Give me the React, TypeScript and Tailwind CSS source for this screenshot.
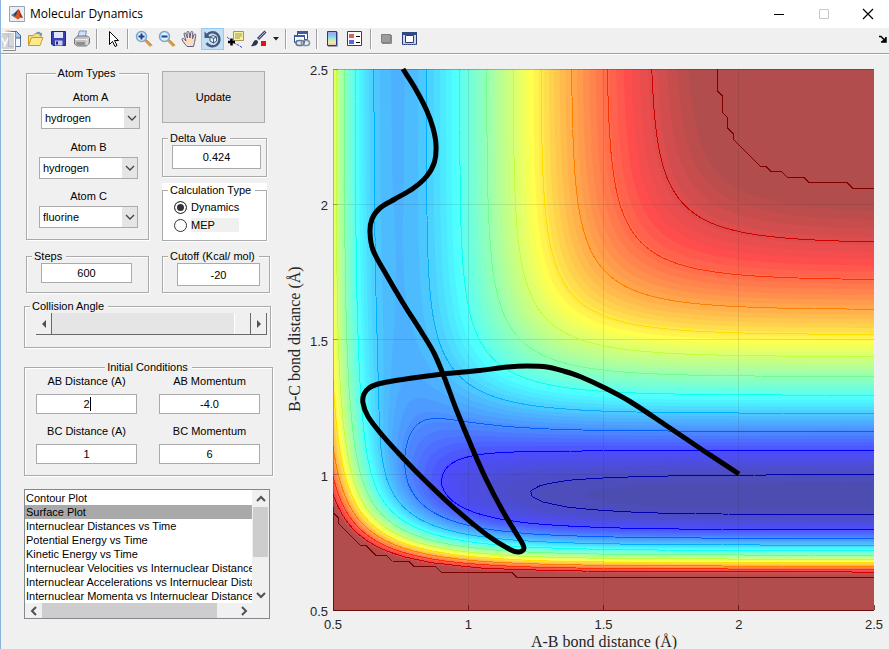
import React, { useState } from 'react'

/* ---------- Potential energy surface (LEPS, collinear H + HF) ---------- */

const HH = { d: 110.479, b: 1.9789, r: 0.7388, k: 0.1875 }
const HF = { d: 142.1119, b: 2.2607, r: 0.9197, k: 0.1788 }
const CUTOFF = -21.5
const V_MIN = -142.1

type Pair = typeof HH

const terms = (p: Pair, r: number) => {
  const e = Math.exp(-p.b * (r - p.r))
  const f = p.d / 4 / (1 + p.k)
  return {
    q: f * ((3 + p.k) * e * e - (2 + 6 * p.k) * e),
    j: f * ((1 + 3 * p.k) * e * e - (6 + 2 * p.k) * e),
  }
}

const energy = (ab: number, bc: number) => {
  const a = terms(HH, ab)
  const b = terms(HF, bc)
  const c = terms(HF, ab + bc)
  const s = (a.j - b.j) ** 2 + (b.j - c.j) ** 2 + (c.j - a.j) ** 2
  return Math.min(CUTOFF, a.q + b.q + c.q - Math.sqrt(s / 2))
}

const N = 101
const GRID: number[][] = []
for (let row = 0; row < N; row++) {
  GRID.push([])
  for (let col = 0; col < N; col++) {
    GRID[row].push(energy(0.5 + (col * 2) / (N - 1), 2.5 - (row * 2) / (N - 1)))
  }
}

// Plot area inside the chart's viewBox
const X0 = 48
const Y0 = 15
const SIZE = 541
const STEP = SIZE / (N - 1)

const clampIndex = (i: number) => Math.max(0, Math.min(N - 1, i))

// Marching squares. A closed path is padded with a ring of low values.
const isoPath = (level: number, closed: boolean) => {
  const at = (c: number, r: number) => (c < 0 || r < 0 || c >= N || r >= N ? -1e9 : GRID[r][c])
  const next = new Map<string, string>()
  const points = new Map<string, string>()
  const from = closed ? -1 : 0
  const to = closed ? N : N - 1
  for (let r = from; r < to; r++) {
    for (let c = from; c < to; c++) {
      const corners = [[c, r], [c + 1, r], [c + 1, r + 1], [c, r + 1]]
      const values = corners.map(([x, y]) => at(x, y))
      const above = values.map((v) => v >= level)
      if (above.every((v) => v === above[0])) continue
      const keys = [`h${c},${r}`, `v${c + 1},${r}`, `h${c},${r + 1}`, `v${c},${r}`]
      const crossings: { key: string; exit: boolean }[] = []
      for (let e = 0; e < 4; e++) {
        const n = (e + 1) % 4
        if (above[e] === above[n]) continue
        const t = (level - values[e]) / (values[n] - values[e])
        const [ax, ay] = corners[e]
        const [bx, by] = corners[n]
        const px = X0 + STEP * clampIndex(ax + (bx - ax) * t)
        const py = Y0 + STEP * clampIndex(ay + (by - ay) * t)
        points.set(keys[e], `${px.toFixed(1)} ${py.toFixed(1)}`)
        crossings.push({ key: keys[e], exit: above[e] })
      }
      crossings.forEach((cr, i) => {
        if (!cr.exit) return
        const prev = crossings[(i + crossings.length - 1) % crossings.length]
        next.set(cr.key, prev.key)
      })
    }
  }
  let d = ''
  if (!closed) {
    next.forEach((end, start) => {
      d += `M${points.get(start)}L${points.get(end)}`
    })
    return d
  }
  while (next.size > 0) {
    let key = next.keys().next().value as string
    d += 'M' + points.get(key)
    while (next.has(key)) {
      const n = next.get(key) as string
      next.delete(key)
      key = n
      d += 'L' + points.get(key)
    }
    d += 'Z'
  }
  return d
}

const ramp = (j: number) => {
  if (j < 1 || j > 47) return 0
  if (j <= 16) return j / 16
  return j <= 31 ? 1 : (48 - j) / 16
}

const jet = (i: number, alpha: number) => {
  const mix = (v: number) => Math.round(255 * (v * alpha + 1 - alpha))
  return `rgb(${mix(ramp(i - 24))},${mix(ramp(i - 8))},${mix(ramp(i + 8))})`
}

const SPAN = CUTOFF - V_MIN
const BANDS = Array.from({ length: 62 }, (_, i) => ({
  d: isoPath(V_MIN + (SPAN * (i + 1)) / 64, true),
  color: jet(i + 2, 0.7),
}))

const LINES = Array.from({ length: 12 }, (_, i) => {
  const level = i === 11 ? CUTOFF : -138.1 + i * 10.6
  const index = Math.min(64, Math.floor(((level - V_MIN) / SPAN) * 64) + 1)
  return { d: isoPath(level, false), color: jet(index, 1) }
})

/* ---------- Trajectory ---------- */

const TRAJECTORY = [
  [454, 420], [422, 399], [382, 372], [345, 347.5], [320, 334], [295, 322.5], [280, 317.5], [262, 313],
  [242, 312], [222, 313], [195, 316.5], [158, 320], [135, 323], [105, 327.5], [93, 330], [84, 334],
  [79, 340], [78, 349], [83, 362.5], [98, 382], [118, 404], [138, 424.5], [168, 453], [202, 481],
  [225, 495.5], [234, 498], [239, 494], [231.5, 480], [218, 457.5], [201.5, 426], [188, 396], [171.5, 356],
  [158, 320], [149, 299], [138, 280.5], [118, 249], [101.5, 221], [88, 196], [85, 178], [87, 165],
  [95, 154], [110, 145], [128, 134.5], [141.5, 122.5], [149.5, 108], [151, 91], [148, 74], [141.5, 56],
  [130, 34], [118, 15],
]

const smoothPath = (pts: number[][]) => {
  const tangent = (i: number) => {
    const a = pts[Math.max(0, i - 1)]
    const b = pts[Math.min(pts.length - 1, i + 1)]
    const l = Math.hypot(b[0] - a[0], b[1] - a[1])
    return [(b[0] - a[0]) / l, (b[1] - a[1]) / l]
  }
  let d = `M${pts[0].join(' ')}`
  for (let i = 0; i < pts.length - 1; i++) {
    const [x1, y1] = pts[i]
    const [x2, y2] = pts[i + 1]
    const [t1, t2] = [tangent(i), tangent(i + 1)]
    const k = Math.hypot(x2 - x1, y2 - y1) / 3
    d += `C${x1 + t1[0] * k} ${y1 + t1[1] * k} ${x2 - t2[0] * k} ${y2 - t2[1] * k} ${x2} ${y2}`
  }
  return d
}

const TICKS = [0.5, 1, 1.5, 2, 2.5]
const tickX = (v: number) => X0 + ((v - 0.5) / 2) * SIZE
const tickY = (v: number) => Y0 + ((2.5 - v) / 2) * SIZE

function SurfaceChart() {
  return (
    <svg viewBox="0 1 604 594" className="block h-auto w-full" role="img" aria-label="Potential energy surface">
      <rect x={X0} y={Y0} width={SIZE} height={SIZE} fill={jet(1, 0.7)} />
      {BANDS.map((b) => (
        <path key={b.color} d={b.d} fill={b.color} />
      ))}
      <g stroke="#262626" strokeOpacity="0.12" shapeRendering="crispEdges">
        {TICKS.slice(1, 4).map((t) => (
          <path key={t} d={`M${tickX(t)} ${Y0}V${Y0 + SIZE}M${X0} ${tickY(t)}H${X0 + SIZE}`} />
        ))}
      </g>
      <g fill="none" shapeRendering="crispEdges">
        {LINES.map((l, i) => (
          <path key={i} d={l.d} stroke={l.color} />
        ))}
      </g>
      <path d={`M${X0} ${Y0 + SIZE}V${Y0}H${X0 + SIZE}`} fill="none" stroke="#262626" strokeOpacity="0.3" shapeRendering="crispEdges" />
      <path d={`M${X0} ${Y0 + SIZE}H${X0 + SIZE}M${X0} ${tickY(0.87)}V${Y0 + SIZE}`} stroke="#6b1010" shapeRendering="crispEdges" />
      <g stroke="#5a1010" strokeOpacity="0.8" shapeRendering="crispEdges">
        {TICKS.map((t) => (
          <path key={t} d={`M${tickX(t)} ${Y0 + SIZE}v-5`} />
        ))}
      </g>
      <g stroke="#262626" strokeOpacity="0.3" shapeRendering="crispEdges">
        {TICKS.map((t) => (
          <path key={t} d={`M${X0} ${tickY(t)}h5`} />
        ))}
      </g>
      <path d={smoothPath(TRAJECTORY)} fill="none" stroke="#000" strokeWidth="5" strokeLinejoin="round" />
      <g fill="#262626" className="font-['Liberation_Sans',sans-serif] text-[13px]">
        {TICKS.map((t) => (
          <g key={t}>
            <text x={tickX(t)} y={575} textAnchor="middle">{t}</text>
            <text x={X0 - 5} y={tickY(t) + 6} textAnchor="end">{t}</text>
          </g>
        ))}
      </g>
      <g fill="#262626" textAnchor="middle" className="font-['Liberation_Serif',serif] text-[16px]">
        <text x={319} y={593}>A-B bond distance (Å)</text>
        <text transform="translate(15 285) rotate(-90)">B-C bond distance (Å)</text>
      </g>
    </svg>
  )
}

/* ---------- Toolbar icons ---------- */

const ICONS: Record<string, React.ReactNode> = {
  new: (
    <>
      <path d="M5.500 2.500h8l4 4v11h-12z" fill="#f4f8ff" stroke="#5b7299" />
      <path d="M12 2.500h1.500l4 4V9H12z" fill="#a9c4ea" stroke="#3f5f96" />
      <circle cx="5" cy="4" r="3" fill="#f3b183" opacity=".8" />
      <path d="M-2 3.500H11.500V20.500H-2z" fill="#c9ccd0" fillOpacity=".8" stroke="#fff" />
      <path d="M12.500 4v17.500H0" stroke="#8b8b8b" fill="none" />
      <path d="M-1 9l3 6m3-6l-4 9" stroke="#fff" strokeWidth="1.500" fill="none" />
    </>
  ),
  open: (
    <>
      <path d="M2.500 16.500V6.500h5l1.500-2h6v4" fill="#f6dd7c" stroke="#c99a2c" />
      <path d="M2.500 16.500l3-8h11.500l-3 8z" fill="#ffe98f" stroke="#c99a2c" />
      <path d="M10 3.500c2-1.500 4-1 5 1l1-1v3h-3l1-1" fill="#6f8fc7" />
    </>
  ),
  save: (
    <>
      <path d="M2.500 2.500h14v14h-12.500l-1.500-1.500z" fill="#3b41b5" stroke="#23277c" />
      <path d="M5 3h9v6H5z" fill="#dfe6fb" />
      <path d="M6 11.500h7.500v5H6z" fill="#c9cfe6" />
      <path d="M7 12.500h2v3H7z" fill="#23277c" />
    </>
  ),
  print: (
    <>
      <path d="M5.500 8l2-6h7l-1.500 6z" fill="#cfe0fb" stroke="#7d90b5" />
      <path d="M2.500 10l3-3h10l2 2v5l-3 3h-9l-3-2z" fill="#c2c2c2" stroke="#777" />
      <path d="M3 10.500h12l2-1.500M15 10.500V16" stroke="#eee" fill="none" />
      <path d="M4 13h9v3H5z" fill="#8d8d8d" />
      <path d="M12 14h2v1h-2z" fill="#e2b23a" />
    </>
  ),
  pointer: <path d="M6.500 2.500v13l3-3 2.500 5 2-1-2.500-5h4z" fill="#fff" stroke="#000" />,
  zoomIn: (
    <>
      <path d="M11 11l6 6" stroke="#e0a04a" strokeWidth="3" />
      <path d="M12.500 11l5.500 5.500" stroke="#b77a2c" />
      <circle cx="7.500" cy="7.500" r="5" fill="#d9f1fb" stroke="#7aa5cf" strokeWidth="1.500" />
      <path d="M4.500 7.500h6M7.500 4.500v6" stroke="#243f87" strokeWidth="2" />
    </>
  ),
  zoomOut: (
    <>
      <path d="M11 11l6 6" stroke="#e0a04a" strokeWidth="3" />
      <path d="M12.500 11l5.500 5.500" stroke="#b77a2c" />
      <circle cx="7.500" cy="7.500" r="5" fill="#d9f1fb" stroke="#7aa5cf" strokeWidth="1.500" />
      <path d="M4.500 7.500h6" stroke="#243f87" strokeWidth="2" />
    </>
  ),
  pan: (
    <path
      d="M7 17.500C5 15 3 13 2 10.500c0-1.500 1.500-1.500 2.500 0l1.500 1.500-2-7c0-1.500 1.500-1.500 2 0l1.500 4-.5-5.500c0-1.500 2-1.500 2 0l1 5.500.800-5.500c.2-1.500 2-1.300 2 0l-.3 6.200 1.500-4c.5-1.200 2-.8 1.800.6l-1.300 7.200-1 4z"
      fill="#fbdcc0"
      stroke="#5b6184"
    />
  ),
  rotate: (
    <>
      <path d="M4 6a7 7 0 1 1-.5 8" fill="none" stroke="#46597c" strokeWidth="2.500" />
      <path d="M1.500 2.500v6.500h6.500z" fill="#46597c" />
      <path d="M7 8l3-1.500 3.500 1.500v4L10.500 14 7 12zM7 8l3.500 1.500L13.500 8M10.500 9.500V14" fill="#e6f1fb" stroke="#46597c" />
    </>
  ),
  dataCursor: (
    <>
      <path d="M7.500 2.500h10v9h-10z" fill="#f7f2a0" stroke="#a39a4a" />
      <path d="M9 5h7M9 7h7M9 9h5" stroke="#a39a4a" />
      <path d="M1 8c2 1 3 3 4.500 4.500S11 15 13 16.500l3 2" stroke="#3b46c7" fill="none" strokeDasharray="3 1" />
      <path d="M2 13h7M5.500 9.500v7" stroke="#000" strokeWidth="2.500" />
    </>
  ),
  brush: (
    <>
      <path d="M16.500 2.500L9 10" stroke="#3d4470" strokeWidth="3" />
      <path d="M16 3L9.500 9.500" stroke="#aeb6d8" />
      <path d="M2 17c1.500-1 1.500-3.500 3.500-5.500 2-1.500 4.500.5 3 3C7 17 4 17.500 2 17z" fill="#2c3355" />
      <path d="M12 12h5v5h-5z" fill="#e81010" />
    </>
  ),
  link: (
    <>
      <path d="M5.500 2.500h10v8h-10z" fill="#fff" stroke="#2f4a86" />
      <path d="M5 2h11v3H5z" fill="#3e5f9f" />
      <path d="M2.500 6.500h10v7h-10z" fill="#fff" stroke="#2f4a86" />
      <path d="M2 6h11v2H2z" fill="#3e5f9f" />
      <rect x="4" y="11.500" width="8" height="5" rx="2.500" fill="#dbe2ea" stroke="#5d7288" strokeWidth="1.500" />
      <rect x="9.500" y="11.500" width="8" height="5" rx="2.500" fill="none" stroke="#7e93a8" strokeWidth="1.500" />
    </>
  ),
  colorbar: (
    <>
      <defs>
        <linearGradient id="bar" x1="0" y1="0" x2="0" y2="1">
          <stop offset="0" stopColor="#a9a0e8" />
          <stop offset=".3" stopColor="#86c8f0" />
          <stop offset=".6" stopColor="#bdecc4" />
          <stop offset=".8" stopColor="#f3e8a8" />
          <stop offset="1" stopColor="#f0b8a0" />
        </linearGradient>
      </defs>
      <path d="M4.500 2.500h9v14h-9z" fill="url(#bar)" stroke="#2b3a78" />
      <path d="M14.500 3v14.500H5" fill="none" stroke="#9aa0b8" />
    </>
  ),
  legend: (
    <>
      <path d="M1.500 2.500h14v14h-14z" fill="#fff" stroke="#2b3a78" />
      <path d="M3 5h5v4H3z" fill="#e06060" />
      <path d="M3 11h5v4H3z" fill="#6060e0" />
      <path d="M10 7.500h4M10 13.500h4" stroke="#000" />
    </>
  ),
  hide: (
    <>
      <path d="M4.500 5.500h9v8h-9z" fill="#9c9c9c" stroke="#808080" />
      <path d="M14.500 6v8.500H5" fill="none" stroke="#8a8a8a" />
    </>
  ),
  show: (
    <>
      <path d="M2.500 3.500h14v12h-14z" fill="#cdd9ee" stroke="#2b3a78" />
      <path d="M2 3h15v3H2z" fill="#2f4a86" />
      <path d="M5.500 6.500h8v7h-8z" fill="#fff" stroke="#2b3a78" />
      <path d="M3 15h13" stroke="#8fa5cf" strokeDasharray="1 1" />
    </>
  ),
}

function ToolButton({ name, label, active }: { name: string; label: string; active?: boolean }) {
  return (
    <button
      type="button"
      aria-label={label}
      className={
        active
          ? 'flex h-[22px] w-[23px] items-center justify-center border border-[#99c9ef] bg-[#c5e0f5]'
          : 'flex h-[22px] w-[23px] items-center justify-center'
      }
    >
      <svg viewBox="0 0 20 20" className="h-5 w-5 shrink-0 overflow-visible">
        {ICONS[name]}
      </svg>
    </button>
  )
}

const Separator = () => <span className="mx-[3px] h-5 w-0.5 border-r border-l border-r-white border-l-[#a0a0a0]" />

function TitleBar() {
  return (
    <header className="flex h-7 items-center justify-between bg-white">
      <div className="flex items-center gap-[5px] pl-2">
        <svg viewBox="0 0 16 16" className="h-4 w-4">
          <path d="M.5.5h15v15H.5z" fill="#eceef2" stroke="#9aa3b3" />
          <path d="M2 9l3.500-2L7 8.500 5 11z" fill="#3f7fc0" />
          <path d="M5.500 7L9.500 3 8 9l-3 2z" fill="#2b3f66" />
          <path d="M9.500 3c1.500 2 2.500 6 4.500 9-2-.5-3-.5-5 1.500L5 11c2-1 3-4 4.500-8z" fill="#d9541e" />
          <path d="M9.500 3c1.500 2 2.500 6 4.500 9l-3-1.500z" fill="#a12c10" />
        </svg>
        <h1 className="font-['Open_Sans','Noto_Sans',sans-serif] text-[12px] leading-4 text-black">Molecular Dynamics</h1>
      </div>
      <div className="flex">
        <button type="button" aria-label="Minimize" className="flex h-6 w-[45px] items-center justify-center">
          <svg viewBox="0 0 12 12" className="h-3 w-3"><path d="M1 6.500h10" stroke="#000" /></svg>
        </button>
        <button type="button" aria-label="Maximize" className="flex h-6 w-[45px] items-center justify-center">
          <svg viewBox="0 0 12 12" className="h-3 w-3"><path d="M1.500 1.500h9v9h-9z" fill="none" stroke="#c8c8c8" /></svg>
        </button>
        <button type="button" aria-label="Close" className="flex h-6 w-[43px] items-center justify-center">
          <svg viewBox="0 0 12 12" className="h-3 w-3"><path d="M1 1l10 10M11 1L1 11" stroke="#000" strokeWidth="1.200" /></svg>
        </button>
      </div>
    </header>
  )
}

function Toolbar() {
  return (
    <div className="flex h-[26px] items-center overflow-hidden border-b border-[#a0a0a0] pb-1">
      <ToolButton name="new" label="New Figure" />
      <ToolButton name="open" label="Open File" />
      <ToolButton name="save" label="Save Figure" />
      <ToolButton name="print" label="Print Figure" />
      <Separator />
      <ToolButton name="pointer" label="Edit Plot" />
      <Separator />
      <ToolButton name="zoomIn" label="Zoom In" />
      <ToolButton name="zoomOut" label="Zoom Out" />
      <ToolButton name="pan" label="Pan" />
      <ToolButton name="rotate" label="Rotate 3D" active />
      <ToolButton name="dataCursor" label="Data Cursor" />
      <ToolButton name="brush" label="Brush" />
      <button type="button" aria-label="Brush options" className="flex h-[22px] w-3 items-center justify-center">
        <svg viewBox="0 0 6 4" className="h-1 w-1.5"><path d="M0 0h6L3 3.500z" fill="#222" /></svg>
      </button>
      <Separator />
      <ToolButton name="link" label="Link Plot" />
      <Separator />
      <ToolButton name="colorbar" label="Insert Colorbar" />
      <ToolButton name="legend" label="Insert Legend" />
      <Separator />
      <ToolButton name="hide" label="Hide Plot Tools" />
      <ToolButton name="show" label="Show Plot Tools" />
      <button type="button" aria-label="Dock Figure" className="mr-0.5 ml-auto flex h-4 w-2 items-center">
        <svg viewBox="0 0 8 8" className="h-2 w-2"><path d="M0 1.500h2L5 4.500M7 2v5H2" fill="none" stroke="#000" strokeWidth="1.500" /><path d="M7 2v5H2z" /></svg>
      </button>
    </div>
  )
}

/* ---------- Controls ---------- */

type PanelProps = {
  title: string
  className?: string
  bodyClass: string
  center?: boolean
  white?: boolean
  children: React.ReactNode
}

function Panel({ title, className = '', bodyClass, center, white, children }: PanelProps) {
  return (
    <fieldset className={`min-w-0 border border-[#aaa] shadow-[1px_1px_0_#fff,inset_1px_1px_0_#fff] ${className}`}>
      <legend className={`${center ? 'mx-auto' : 'ml-[5px]'} ${white ? 'bg-white' : 'bg-[#f0f0f0]'} pr-1 pl-0.5 whitespace-nowrap`}>
        {title}
      </legend>
      <div className={bodyClass}>{children}</div>
    </fieldset>
  )
}

function Field({ label, value, className = '' }: { label: string; value: string; className?: string }) {
  return (
    <input
      type="text"
      aria-label={label}
      defaultValue={value}
      className={`block w-full border border-[#aaa] bg-white text-center ${className}`}
    />
  )
}

function AtomSelect({ label, value, id, className = '' }: { label: string; value: string; id: string; className?: string }) {
  return (
    <div className={`flex flex-col gap-[3px] ${className}`}>
      <label htmlFor={id} className="text-center">{label}</label>
      <div className="relative">
        <select id={id} defaultValue={value} className="block h-[22px] w-full appearance-none border border-[#aaa] bg-white pl-[3px]">
          <option>hydrogen</option>
          <option>fluorine</option>
          <option>chlorine</option>
        </select>
        <span className="pointer-events-none absolute top-px right-px flex h-5 w-[15px] items-center justify-center bg-[#e5e5e5]">
          <svg viewBox="0 0 10 6" className="h-1.5 w-2.5"><path d="M1 1l4 4 4-4" fill="none" stroke="#444" strokeWidth="1.300" /></svg>
        </span>
      </div>
    </div>
  )
}

function LabelledField({ label, value, id, caret }: { label: string; value: string; id: string; caret?: boolean }) {
  return (
    <div className="flex flex-1 flex-col gap-[6px]">
      <label htmlFor={id} className="text-center">{label}</label>
      <div className="relative">
        <input id={id} type="text" defaultValue={value} className="block h-5 w-full border border-[#aaa] bg-white text-center" />
        {caret && <span className="absolute top-[3px] left-1/2 ml-[3px] h-3.5 w-px bg-black" />}
      </div>
    </div>
  )
}

const Arrow = ({ d }: { d: string }) => (
  <svg viewBox="0 0 10 10" className="h-2.5 w-2.5"><path d={d} fill="none" stroke="#505050" strokeWidth="2" /></svg>
)

const PLOTS = [
  'Contour Plot',
  'Surface Plot',
  'Internuclear Distances vs Time',
  'Potential Energy vs Time',
  'Kinetic Energy vs Time',
  'Internuclear Velocities vs Internuclear Distance',
  'Internuclear Accelerations vs Internuclear Distance',
  'Internuclear Momenta vs Internuclear Distance',
]

function PlotList() {
  const [selected, setSelected] = useState('Surface Plot')

  return (
    <div className="mt-[13px] w-[246px] border border-[#828790] bg-[#f0f0f0]">
      <div className="flex">
        <ul role="listbox" aria-label="Plot type" className="min-w-0 flex-1 overflow-hidden bg-white pt-px">
          {PLOTS.map((p) => (
            <li
              key={p}
              role="option"
              aria-selected={p === selected}
              onClick={() => setSelected(p)}
              className={
                p === selected
                  ? 'h-3.5 bg-[#a9a9a9] pl-px whitespace-nowrap'
                  : 'h-3.5 pl-px whitespace-nowrap'
              }
            >
              {p}
            </li>
          ))}
        </ul>
        <div className="flex w-[17px] flex-col items-center">
          <button type="button" aria-label="Scroll up" className="flex h-[17px] items-center"><Arrow d="M1 7l4-4 4 4" /></button>
          <span className="h-[50px] w-[15px] bg-[#cdcdcd]" />
          <button type="button" aria-label="Scroll down" className="mt-auto flex h-[17px] items-center"><Arrow d="M1 3l4 4 4-4" /></button>
        </div>
      </div>
      <div className="flex h-[15px] items-stretch pr-[17px]">
        <button type="button" aria-label="Scroll left" className="flex w-[17px] items-center justify-center"><Arrow d="M7 1L3 5l4 4" /></button>
        <span className="w-[175px] bg-[#cdcdcd]" />
        <button type="button" aria-label="Scroll right" className="ml-auto flex w-[17px] items-center justify-center"><Arrow d="M3 1l4 4-4 4" /></button>
      </div>
    </div>
  )
}

function Controls() {
  return (
    <aside className="w-[284px] shrink-0 pt-[11px] pl-[23px] font-['Liberation_Sans',Arial,sans-serif] text-[11px] leading-[14px] text-black">
      <div className="flex items-start gap-[13px] pl-0.5">
        <div className="w-[123px]">
          <Panel title="Atom Types" center bodyClass="pt-[10px] pr-2.5 pb-[11px] pl-3">
            <AtomSelect id="atomA" label="Atom A" value="hydrogen" className="ml-0.5 -mr-0.5" />
            <AtomSelect id="atomB" label="Atom B" value="hydrogen" className="mt-[11px]" />
            <AtomSelect id="atomC" label="Atom C" value="fluorine" className="mt-[10px]" />
          </Panel>
          <Panel title="Steps" className="mt-[9px]" bodyClass="pr-4 pb-[9px] pl-3.5">
            <Field label="Steps" value="600" className="h-5" />
          </Panel>
        </div>
        <div className="w-[108px] pt-[5px]">
          <button type="button" className="block h-[52px] w-[103px] border border-[#adadad] bg-[#e1e1e1]">Update</button>
          <Panel title="Delta Value" className="mt-2 mr-[3px]" bodyClass="pr-[5px] pb-[7px] pl-[9px]">
            <Field label="Delta Value" value="0.424" className="h-[24px]" />
          </Panel>
          <div className="mt-1.5 mr-[3px] bg-white">
            <Panel title="Calculation Type" white bodyClass="px-[11px] pt-px pb-1.5">
              <label className="flex h-[18px] items-center gap-[4px]">
                <input
                  type="radio"
                  name="calc"
                  defaultChecked
                  className="h-[13px] w-[13px] appearance-none rounded-full border border-[#333] bg-white checked:bg-[#333] checked:shadow-[inset_0_0_0_2px_#fff]"
                />
                Dynamics
              </label>
              <label className="flex h-[18px] items-center gap-[4px]">
                <input
                  type="radio"
                  name="calc"
                  className="h-[13px] w-[13px] appearance-none rounded-full border border-[#333] bg-white checked:bg-[#333] checked:shadow-[inset_0_0_0_2px_#fff]"
                />
                <span className="w-12 bg-[#f0f0f0]">MEP</span>
              </label>
            </Panel>
          </div>
          <Panel title="Cutoff (Kcal/ mol)" className="mt-2" bodyClass="pr-[9px] pb-1.5 pl-3.5">
            <Field label="Cutoff" value="-20" className="h-[23px]" />
          </Panel>
        </div>
      </div>

      <Panel title="Collision Angle" className="mt-1.5 w-[247px]" bodyClass="pr-[3px] pb-3 pl-[11px]">
        <div className="flex h-[22px] border-b border-[#696969]">
          <button type="button" aria-label="Decrease angle" className="flex w-4 items-center justify-center border-r border-[#696969]">
            <svg viewBox="0 0 4 8" className="h-2 w-1"><path d="M4 0v8L0 4z" fill="#505050" /></svg>
          </button>
          <input
            type="range"
            aria-label="Collision angle"
            min={0}
            max={180}
            defaultValue={180}
            className="h-[21px] min-w-0 flex-1 appearance-none bg-[#e5e5e5] [&::-webkit-slider-thumb]:h-[21px] [&::-webkit-slider-thumb]:w-[17px] [&::-webkit-slider-thumb]:appearance-none [&::-webkit-slider-thumb]:border-r [&::-webkit-slider-thumb]:border-l [&::-webkit-slider-thumb]:border-r-[#696969] [&::-webkit-slider-thumb]:border-l-white [&::-webkit-slider-thumb]:bg-[#f0f0f0]"
          />
          <button type="button" aria-label="Increase angle" className="flex w-4 items-center justify-center border-r border-[#696969]">
            <svg viewBox="0 0 4 8" className="h-2 w-1"><path d="M0 0v8l4-4z" fill="#505050" /></svg>
          </button>
        </div>
      </Panel>

      <Panel title="Initial Conditions" center className="mt-3 w-[249px]" bodyClass="pr-3 pb-[11px] pl-[11px]">
        <div className="flex gap-[22px]">
          <LabelledField id="abDistance" label="AB Distance (A)" value="2" caret />
          <LabelledField id="abMomentum" label="AB Momentum" value="-4.0" />
        </div>
        <div className="mt-[10px] flex gap-[22px]">
          <LabelledField id="bcDistance" label="BC Distance (A)" value="1" />
          <LabelledField id="bcMomentum" label="BC Momentum" value="6" />
        </div>
      </Panel>

      <PlotList />
    </aside>
  )
}

export default function App() {
  return (
    <div className="min-h-screen border-l border-[#8cb4de] bg-[#f0f0f0]">
      <TitleBar />
      <Toolbar />
      <main className="flex items-start border-t border-white">
        <Controls />
        <div className="min-w-0 flex-1">
          <SurfaceChart />
        </div>
      </main>
    </div>
  )
}
